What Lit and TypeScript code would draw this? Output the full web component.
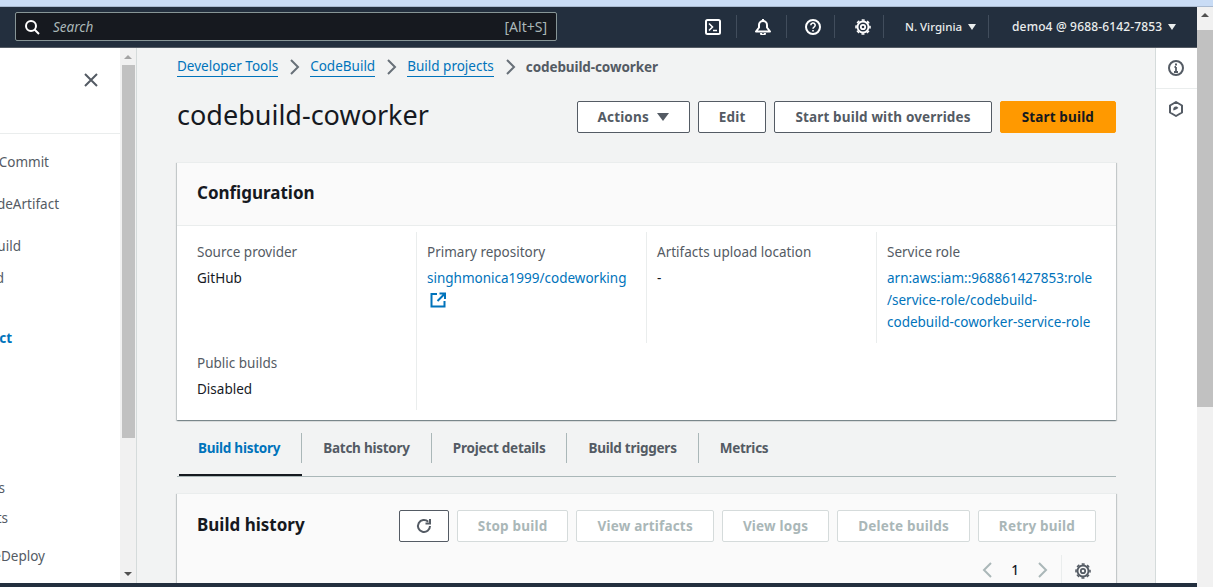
import { LitElement, html, css, svg } from 'lit';
import { customElement } from 'lit/decorators.js';

const navItems = [
  { text: 'Source • CodeCommit', end: 49, gap: 18 },
  { text: 'Artifacts • CodeArtifact', end: 59, gap: 22 },
  { text: 'Build • CodeBuild', end: 21, gap: 22 },
  { text: 'Getting started', end: 4, gap: 12 },
  { text: 'Build project', end: 12, gap: 40, current: true },
  { text: 'Report groups', end: 5, gap: 130 },
  { text: 'Build artifacts', end: 8, gap: 10 },
  { text: 'Deploy • CodeDeploy', end: 45, gap: 18 },
];

const gear = svg`<g fill="none" stroke="currentColor"><circle cx="8" cy="8" r="5.5" stroke-width="1.9"/><circle cx="8" cy="8" r="7" stroke-width="1.6" stroke-dasharray="3 2.5" stroke-dashoffset="1.5"/><circle cx="8" cy="8" r="2.2" stroke-width="1.8"/></g>`;

@customElement('app-root')
export class AppRoot extends LitElement {
  static styles = css`
    :host {
      display: block;
      font-family: 'Noto Sans', 'Open Sans', sans-serif;
      font-size: 13.5px;
      line-height: 20px;
      color: #16191f;
    }
    * {
      box-sizing: border-box;
    }
    svg {
      display: block;
    }
    a {
      color: #0073bb;
      text-decoration: none;
    }

    .page {
      display: flex;
      flex-direction: column;
      width: 1213px;
      height: 587px;
      overflow: hidden;
      background: #f2f3f3;
    }
    .tabstrip {
      height: 7px;
      flex: none;
      background: #c9dcf5;
      border-bottom: 1px solid #a9bad0;
    }
    .window {
      flex: 1;
      min-height: 0;
      display: flex;
    }
    .app {
      width: 1197px;
      flex: none;
      display: flex;
      flex-direction: column;
    }

    /* Top bar */
    .topbar {
      height: 41px;
      flex: none;
      background: #232f3e;
      border-bottom: 1px solid #545b64;
      display: flex;
      align-items: center;
      padding: 0 0 1px 15px;
      color: #fff;
    }
    .search {
      width: 542px;
      height: 29px;
      background: #16191f;
      border: 1px solid #879596;
      border-radius: 2px;
      display: flex;
      align-items: center;
      gap: 13px;
      padding: 0 9px 0 8px;
      color: #aab7b8;
    }
    .search i {
      flex: 1;
      font-size: 13.5px;
    }
    .search span {
      font-size: 14px;
    }
    .search svg {
      color: #fff;
    }
    .top-actions {
      margin-left: 148px;
      display: flex;
      align-items: center;
    }
    .top-icon {
      height: 23px;
      display: flex;
      align-items: center;
      border-right: 1px solid #414d5c;
    }
    .top-icon.term {
      width: 32px;
    }
    .top-icon.bell {
      width: 50px;
      padding-left: 18px;
    }
    .top-icon.help {
      width: 48px;
      padding-left: 18px;
    }
    .top-icon.cog {
      width: 49px;
      padding-left: 20px;
    }
    .top-menu {
      display: flex;
      align-items: center;
      font-size: 12px;
      font-weight: 500;
      white-space: nowrap;
      color: #eaeded;
      height: 23px;
    }
    .top-menu.region {
      width: 105px;
      padding-left: 21px;
      gap: 6px;
      font-size: 11.5px;
      border-right: 1px solid #414d5c;
    }
    .top-menu.account {
      padding-left: 23px;
      gap: 6px;
      letter-spacing: 0.15px;
    }
    .caret {
      width: 0;
      height: 0;
      border-left: 4px solid transparent;
      border-right: 4px solid transparent;
      border-top: 6px solid currentColor;
    }

    .body {
      flex: 1;
      min-height: 0;
      display: flex;
    }

    /* Left navigation */
    .nav {
      width: 120px;
      flex: none;
      background: #fff;
      overflow: hidden;
    }
    .nav-head {
      height: 86px;
      border-bottom: 1px solid #eaeded;
      display: flex;
      justify-content: flex-end;
      padding: 24px 21px 0 0;
      color: #545b64;
    }
    .nav-item {
      display: flex;
      justify-content: flex-end;
      white-space: nowrap;
      color: #545b64;
    }
    .nav-item.current {
      color: #0073bb;
      font-weight: 700;
    }
    .nav-scroll {
      width: 17px;
      flex: none;
      background: #f1f1f1;
      border-right: 1px solid #d5dbdb;
      display: flex;
      flex-direction: column;
      align-items: center;
    }
    .arrow-up,
    .arrow-down {
      width: 0;
      height: 0;
      border-left: 4px solid transparent;
      border-right: 4px solid transparent;
    }
    .arrow-up {
      border-bottom: 4px solid #a3a3a3;
    }
    .arrow-down {
      border-top: 4px solid #505050;
    }
    .nav-scroll .arrow-up {
      margin-top: 7px;
    }
    .nav-scroll .thumb {
      width: 13px;
      height: 373px;
      margin-top: 6px;
      margin-left: 1px;
      background: #c1c1c1;
    }
    .nav-scroll .arrow-down {
      margin-top: 134px;
    }

    /* Main column */
    .main {
      width: 1018px;
      flex: none;
      padding: 9px 39px 0 40px;
      overflow: hidden;
    }
    .crumbs {
      display: flex;
      align-items: center;
      height: 20px;
      color: #545b64;
    }
    .crumbs a {
      border-bottom: 1px solid #0073bb;
      line-height: 19px;
      height: 20px;
    }
    .crumbs svg {
      margin: 0 8px;
      color: #687078;
    }
    .crumbs b {
      font-weight: 700;
      letter-spacing: -0.1px;
    }
    .title-row {
      display: flex;
      align-items: center;
      margin-top: 24px;
      height: 32px;
    }
    h1 {
      margin: -4px auto 0 0;
      font-size: 27px;
      line-height: 36px;
      font-weight: 400;
    }
    .btn {
      height: 32px;
      padding: 0 20px;
      margin-left: 8px;
      display: flex;
      align-items: center;
      background: #fff;
      border: 1px solid #545b64;
      border-radius: 2px;
      color: #545b64;
      font-weight: 700;
      letter-spacing: 0.15px;
      white-space: nowrap;
    }
    .btn.primary {
      background: #f90;
      border-color: #f90;
      color: #16191f;
      padding: 0 21px;
    }
    .btn.off {
      border-color: #d5dbdb;
      color: #aab7b8;
      letter-spacing: 0.2px;
    }
    .btn .caret {
      margin-left: 8px;
      border-left-width: 6px;
      border-right-width: 6px;
      border-top-width: 8px;
    }
    .btn.icon {
      width: 50px;
      padding: 0;
      justify-content: center;
    }

    .card {
      background: #fff;
      border-top: 1px solid #eaeded;
      box-shadow: 0 1px 1px 0 rgba(0, 28, 36, 0.3), 1px 1px 1px 0 rgba(0, 28, 36, 0.15), -1px 1px 1px 0 rgba(0, 28, 36, 0.15);
    }
    .config {
      margin-top: 29px;
      height: 258px;
    }
    .config-head {
      height: 63px;
      padding: 0 20px 3px;
      background: #fafafa;
      border-bottom: 1px solid #eaeded;
      display: flex;
      align-items: center;
    }
    h2 {
      margin: 0;
      font-size: 17px;
      line-height: 22px;
      font-weight: 700;
    }
    .kv-grid {
      display: grid;
      grid-template-columns: repeat(4, 230px);
      grid-template-rows: 111px 67px;
      margin: 6px 0 0 10px;
    }
    .kv {
      padding: 10px 0 0 10px;
      border-right: 1px solid #eaeded;
    }
    .kv:nth-child(4) {
      border-right: 0;
    }
    .kv label {
      display: block;
      color: #545b64;
    }
    .kv p {
      margin: 5px 0 0;
      line-height: 22px;
    }
    .kv p span {
      display: block;
      white-space: nowrap;
    }
    .ext {
      margin: 3px 0 0 3px;
    }

    /* Tabs */
    .tabs {
      margin-top: 13px;
      height: 44px;
      display: flex;
      border-bottom: 1px solid #aab7b8;
    }
    .tab {
      position: relative;
      height: 30px;
      line-height: 30px;
      padding: 0 21px;
      font-weight: 700;
      letter-spacing: -0.25px;
      color: #545b64;
      border-right: 1px solid #aab7b8;
    }
    .tab:last-child {
      border-right: 0;
    }
    .tab.active {
      color: #0073bb;
    }
    .tab.active::after {
      content: '';
      position: absolute;
      left: 2px;
      right: -1px;
      top: 41px;
      height: 2px;
      background: #16191f;
    }

    .history {
      margin-top: 16px;
      height: 120px;
      background: #fafafa;
      padding: 16px 20px 0;
    }
    .history-row {
      display: flex;
      align-items: center;
    }
    .history-row h2 {
      margin-right: auto;
      margin-top: -2px;
    }
    .pager {
      display: flex;
      align-items: center;
      justify-content: flex-end;
      margin-top: 13px;
      height: 30px;
      color: #16191f;
    }
    .pager .prev,
    .pager .next {
      color: #aab7b8;
    }
    .pager b {
      width: 38px;
      text-align: center;
      font-weight: 500;
    }
    .pager .tools {
      margin-left: 11px;
      width: 35px;
      height: 30px;
      border-left: 1px solid #eaeded;
      padding: 8px 0 0 13px;
      color: #545b64;
    }

    /* Right tools panel */
    .tools-panel {
      width: 42px;
      flex: none;
      background: #fff;
      border-left: 1px solid #d5dbdb;
      color: #545b64;
      padding-right: 1px;
    }
    .tool {
      height: 40px;
      display: flex;
      align-items: center;
      justify-content: center;
    }
    .tool:first-child {
      height: 41px;
      border-bottom: 1px solid #eaeded;
      margin-right: -1px;
      padding-right: 1px;
    }

    .bottom {
      height: 4px;
      flex: none;
      background: #232f3e;
    }

    .page-scroll {
      width: 16px;
      flex: none;
      background: #f1f1f1;
      display: flex;
      flex-direction: column;
      align-items: center;
    }
    .page-scroll .arrow-up {
      margin-top: 6px;
      border-bottom-color: #505050;
    }
    .page-scroll .thumb {
      width: 16px;
      height: 377px;
      margin-top: 13px;
      background: #c1c1c1;
    }
  `;

  private chevron() {
    return html`<svg width="16" height="16" viewBox="0 0 16 16" fill="none" stroke="currentColor" stroke-width="2">
      <path d="M5 1l7 7-7 7" />
    </svg>`;
  }

  render() {
    return html`
      <div class="page">
        <div class="tabstrip"></div>
        <div class="window">
          <div class="app">
            <header class="topbar">
              <div class="search">
                <svg width="16" height="16" viewBox="0 0 16 16" fill="none" stroke="currentColor" stroke-width="2">
                  <circle cx="7" cy="7" r="5" />
                  <path d="M10.5 10.5L15 15" />
                </svg>
                <i>Search</i>
                <span>[Alt+S]</span>
              </div>
              <div class="top-actions">
                <div class="top-icon term">
                  <svg width="16" height="16" viewBox="0 0 16 16" fill="none" stroke="currentColor" stroke-width="2">
                    <rect x="1" y="1" width="14" height="14" rx="1.5" />
                    <path d="M4 4.5L7.5 8 4 11.5M8 11.5h4" stroke-width="1.6" />
                  </svg>
                </div>
                <div class="top-icon bell">
                  <svg width="16" height="16" viewBox="0 0 16 16" fill="none" stroke="currentColor" stroke-width="2">
                    <path d="M1 12.5h14L12 8.5V6a4 4 0 0 0-8 0v2.5z" stroke-linejoin="round" />
                    <path d="M8 0v2M6 14a2 2 0 0 0 4 0" />
                  </svg>
                </div>
                <div class="top-icon help">
                  <svg width="16" height="16" viewBox="0 0 16 16" fill="none" stroke="currentColor" stroke-width="2">
                    <circle cx="8" cy="8" r="7" />
                    <path d="M5.8 6.2a2.2 2.2 0 1 1 3.3 1.9C8.4 8.5 8 9 8 9.8" stroke-width="1.6" />
                    <path d="M8 11v1.6" stroke-width="1.6" />
                  </svg>
                </div>
                <div class="top-icon cog"><svg width="16" height="16" viewBox="0 0 16 16">${gear}</svg></div>
                <div class="top-menu region">N. Virginia <span class="caret"></span></div>
                <div class="top-menu account">demo4 @ 9688-6142-7853 <span class="caret"></span></div>
              </div>
            </header>
            <div class="body">
              <aside class="nav">
                <div class="nav-head">
                  <svg width="16" height="16" viewBox="0 0 16 16" fill="none" stroke="currentColor" stroke-width="2">
                    <path d="M2 2l12 12M14 2L2 14" />
                  </svg>
                </div>
                ${navItems.map(
                  (n) => html`<div
                    class="nav-item ${n.current ? 'current' : ''}"
                    style="width:${n.end}px;margin-top:${n.gap}px"
                  >
                    <span>${n.text}</span>
                  </div>`
                )}
              </aside>
              <div class="nav-scroll">
                <span class="arrow-up"></span>
                <span class="thumb"></span>
                <span class="arrow-down"></span>
              </div>
              <main class="main">
                <nav class="crumbs">
                  <a href="#">Developer Tools</a>${this.chevron()}
                  <a href="#">CodeBuild</a>${this.chevron()}
                  <a href="#">Build projects</a>${this.chevron()}
                  <b>codebuild-coworker</b>
                </nav>
                <div class="title-row">
                  <h1>codebuild-coworker</h1>
                  <div class="btn">Actions <span class="caret"></span></div>
                  <div class="btn">Edit</div>
                  <div class="btn">Start build with overrides</div>
                  <div class="btn primary">Start build</div>
                </div>
                <section class="card config">
                  <div class="config-head"><h2>Configuration</h2></div>
                  <div class="kv-grid">
                    <div class="kv">
                      <label>Source provider</label>
                      <p>GitHub</p>
                    </div>
                    <div class="kv">
                      <label>Primary repository</label>
                      <p>
                        <a href="#"><span>singhmonica1999/codeworking</span></a>
                        <svg class="ext" width="16" height="16" viewBox="0 0 16 16" fill="none" stroke="#0073bb" stroke-width="2">
                          <path d="M7 2H1.5v12.5h13V9M9.5 1.5H15V7M14.5 2L7.5 9" />
                        </svg>
                      </p>
                    </div>
                    <div class="kv">
                      <label>Artifacts upload location</label>
                      <p>-</p>
                    </div>
                    <div class="kv">
                      <label>Service role</label>
                      <p>
                        <a href="#">
                          <span>arn:aws:iam::968861427853:role</span>
                          <span>/service-role/codebuild-</span>
                          <span>codebuild-coworker-service-role</span>
                        </a>
                      </p>
                    </div>
                    <div class="kv">
                      <label>Public builds</label>
                      <p>Disabled</p>
                    </div>
                  </div>
                </section>
                <div class="tabs">
                  <div class="tab active">Build history</div>
                  <div class="tab">Batch history</div>
                  <div class="tab">Project details</div>
                  <div class="tab">Build triggers</div>
                  <div class="tab">Metrics</div>
                </div>
                <section class="card history">
                  <div class="history-row">
                    <h2>Build history</h2>
                    <div class="btn icon">
                      <svg width="16" height="16" viewBox="0 0 16 16" fill="none" stroke="currentColor" stroke-width="2">
                        <path d="M14 8a6 6 0 1 1-1.8-4.3" />
                        <path d="M14 1v4.5H9.5" />
                      </svg>
                    </div>
                    <div class="btn off">Stop build</div>
                    <div class="btn off">View artifacts</div>
                    <div class="btn off">View logs</div>
                    <div class="btn off">Delete builds</div>
                    <div class="btn off">Retry build</div>
                  </div>
                  <div class="pager">
                    <span class="prev">
                      <svg width="16" height="16" viewBox="0 0 16 16" fill="none" stroke="currentColor" stroke-width="2"><path d="M11 1L4 8l7 7" /></svg>
                    </span>
                    <b>1</b>
                    <span class="next">
                      <svg width="16" height="16" viewBox="0 0 16 16" fill="none" stroke="currentColor" stroke-width="2"><path d="M5 1l7 7-7 7" /></svg>
                    </span>
                    <div class="tools"><svg width="16" height="16" viewBox="0 0 16 16">${gear}</svg></div>
                  </div>
                </section>
              </main>
              <aside class="tools-panel">
                <div class="tool">
                  <svg width="16" height="16" viewBox="0 0 16 16" fill="none" stroke="currentColor" stroke-width="2">
                    <circle cx="8" cy="8" r="7" />
                    <path d="M8 7v4.5M6 12h4M6.5 7H8" stroke-width="1.8" />
                    <path d="M8 3.4v2" />
                  </svg>
                </div>
                <div class="tool">
                  <svg width="16" height="16" viewBox="0 0 16 16" fill="none" stroke="currentColor" stroke-width="2">
                    <path d="M8 1l6 3.5v7L8 15l-6-3.5v-7z" stroke-linejoin="round" />
                    <path d="M5.5 9.5A2.8 2.8 0 0 1 8 5.5c1 0 2 .6 2.4 1.5L8 8.5z" fill="currentColor" stroke="none" />
                  </svg>
                </div>
              </aside>
            </div>
            <div class="bottom"></div>
          </div>
          <div class="page-scroll">
            <span class="arrow-up"></span>
            <span class="thumb"></span>
          </div>
        </div>
      </div>
    `;
  }
}
